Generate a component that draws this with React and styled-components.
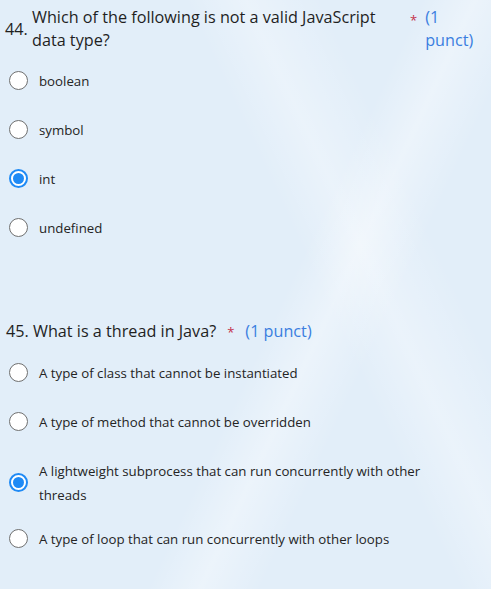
import React from "react";
import styled, { createGlobalStyle } from "styled-components";

const Global = createGlobalStyle`
  html, body { margin: 0; padding: 0; }
  body {
    background: #e3eef9;
    font-family: "Open Sans", "Noto Sans", "Liberation Sans", sans-serif;
    color: #242424;
  }
`;

const Page = styled.div`
  width: 491px;
  height: 589px;
  box-sizing: border-box;
  padding-top: 6px;
  overflow: hidden;
  background:
    linear-gradient(115deg, rgba(255,255,255,0) 55%, rgba(255,255,255,0.35) 62%, rgba(255,255,255,0) 70%),
    linear-gradient(65deg, rgba(255,255,255,0) 60%, rgba(255,255,255,0.3) 68%, rgba(255,255,255,0) 78%),
    #e2eef9;
`;

const Question = styled.section`
  display: flex;
  flex-direction: column;
  & + & { margin-top: 68px; }
`;

const Header = styled.div`
  display: flex;
  align-items: ${(p) => (p.$wrap ? "center" : "baseline")};
  padding-left: ${(p) => p.$indent}px;
  font-size: 16.2px;
  line-height: 23px;
  color: #1f1f1f;
  margin-bottom: 4px;
`;

const Num = styled.span`
  flex: none;
  width: 27px;
`;

const Title = styled.span`
  flex: ${(p) => (p.$wrap ? "0 0 377px" : "none")};
`;

const Star = styled.span`
  color: #c4314b;
  font-size: 13px;
  margin: ${(p) => (p.$wrap ? "0 8px 0 1px" : "0 11px 0 11px")};
  align-self: ${(p) => (p.$wrap ? "flex-start" : "auto")};
  padding-top: ${(p) => (p.$wrap ? "8px" : "0")};
  line-height: ${(p) => (p.$wrap ? "13px" : "inherit")};
`;

const Points = styled.span`
  color: #3a7ee0;
  flex: ${(p) => (p.$wrap ? "0 0 50px" : "none")};
  align-self: ${(p) => (p.$wrap ? "flex-start" : "auto")};
`;

const Options = styled.div`
  display: flex;
  flex-direction: column;
`;

const Option = styled.label`
  display: flex;
  align-items: center;
  padding: 12.5px 0 ${(p) => (p.$multi ? "7.5px" : "12.5px")} 9px;
  font-size: 13.28px;
  line-height: 24px;
  color: #242424;
`;

const Radio = styled.span`
  flex: none;
  box-sizing: border-box;
  width: 19px;
  height: 19px;
  border-radius: 50%;
  margin-right: 11px;
  border: ${(p) => (p.$checked ? "2px solid #1f8af5" : "1.5px solid #707070")};
  background: #fff;
  display: flex;
  align-items: center;
  justify-content: center;
  &::after {
    content: "";
    display: ${(p) => (p.$checked ? "block" : "none")};
    width: 11px;
    height: 11px;
    border-radius: 50%;
    background: #1f8af5;
  }
`;

const Label = styled.span`
  max-width: 400px;
`;

const q1 = ["boolean", "symbol", "int", "undefined"];
const q2 = [
  "A type of class that cannot be instantiated",
  "A type of method that cannot be overridden",
  "A lightweight subprocess that can run concurrently with other threads",
  "A type of loop that can run concurrently with other loops",
];

export default function App() {
  return (
    <Page>
      <Global />
      <Question>
        <Header $wrap $indent={5}>
          <Num>44.</Num>
          <Title $wrap>Which of the following is not a valid JavaScript data type?</Title>
          <Star $wrap>*</Star>
          <Points $wrap>(1 punct)</Points>
        </Header>
        <Options>
          {q1.map((t, i) => (
            <Option key={t}>
              <Radio $checked={i === 2} />
              <Label>{t}</Label>
            </Option>
          ))}
        </Options>
      </Question>
      <Question>
        <Header $indent={6}>
          <Num>45.</Num>
          <Title>What is a thread in Java?</Title>
          <Star>*</Star>
          <Points>(1 punct)</Points>
        </Header>
        <Options>
          {q2.map((t, i) => (
            <Option key={t} $multi={i === 2}>
              <Radio $checked={i === 2} />
              <Label>{t}</Label>
            </Option>
          ))}
        </Options>
      </Question>
    </Page>
  );
}
